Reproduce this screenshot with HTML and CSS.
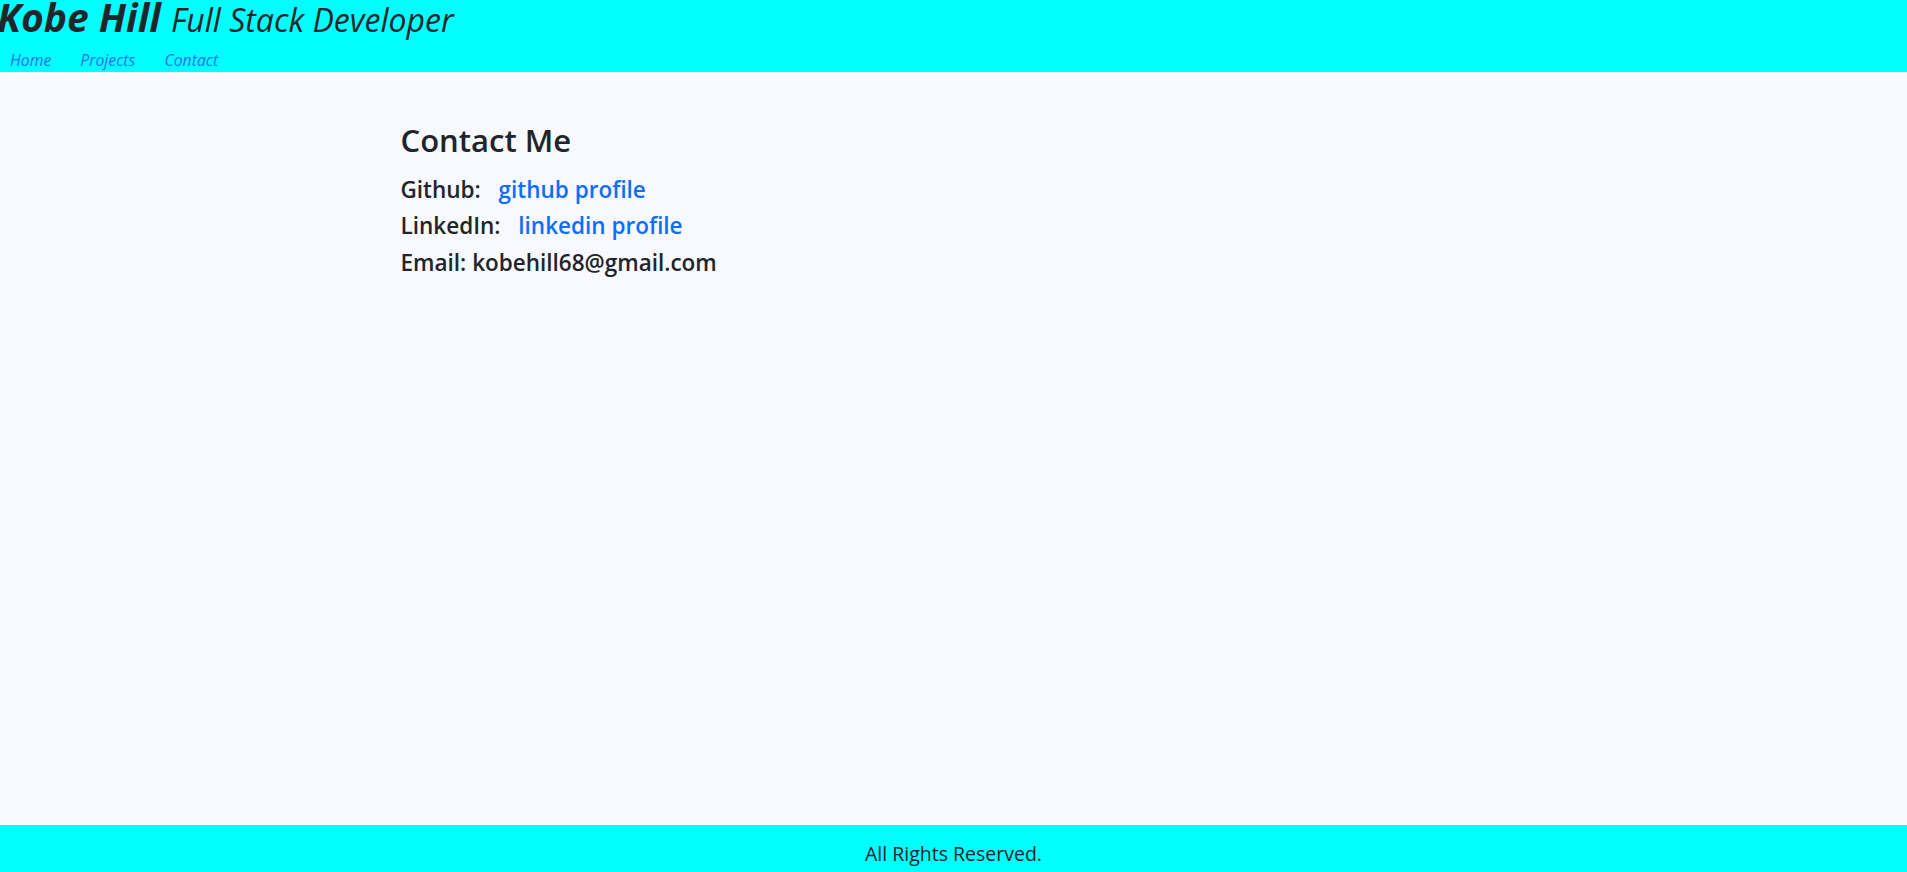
FILE: index.html
```html
<!DOCTYPE html>
<html lang="en">
<head>
<meta charset="utf-8">
<title>Kobe Hill - Contact</title>
<link rel="stylesheet" href="styles.css">
</head>
<body>
<div class="page">
  <header class="site-header">
    <h1 class="brand"><span class="brand-name">Kobe Hill</span> <span class="brand-role">Full Stack Developer</span></h1>
    <nav class="site-nav">
      <a href="#" class="nav-link">Home</a>
      <a href="#" class="nav-link">Projects</a>
      <a href="#" class="nav-link">Contact</a>
    </nav>
  </header>
  <main class="content">
    <section class="contact">
      <h2 class="contact-title">Contact Me</h2>
      <p class="contact-line">Github: <a href="#" class="contact-link">github profile</a></p>
      <p class="contact-line">LinkedIn: <a href="#" class="contact-link">linkedin profile</a></p>
      <p class="contact-line">Email: kobehill68@gmail.com</p>
    </section>
  </main>
  <footer class="site-footer">
    <p class="footer-text">All Rights Reserved.</p>
  </footer>
</div>
</body>
</html>
```

FILE: styles.css
```css
html, body {
  margin: 0;
  padding: 0;
}
body {
  font-family: "Open Sans", "Noto Sans", sans-serif;
  color: #212529;
  background: #f8f8ff;
}
.page {
  min-height: 100vh;
  display: flex;
  flex-direction: column;
}
.site-header {
  background: #00ffff;
  display: flex;
  flex-direction: column;
  height: 72px;
  flex-shrink: 0;
}
.brand {
  margin: 0 0 0 -3px;
  font-size: 39px;
  font-style: italic;
  line-height: 34px;
  font-weight: 400;
  white-space: nowrap;
}
.brand-name {
  font-size: 39px;
  font-weight: 700;
}
.brand-role {
  font-size: 32px;
  font-weight: 400;
}
.site-nav {
  display: flex;
  gap: 29px;
  padding-left: 10px;
  margin-top: 12px;
  height: 22px;
}
.nav-link {
  color: #2b6ef5;
  font-style: italic;
  font-size: 15.8px;
  line-height: 22px;
  text-decoration: none;
}
.content {
  flex: 1;
}
.contact {
  max-width: 1320px;
  margin: 0 auto;
  padding: 0 0 0 107px;
  box-sizing: border-box;
}
.contact-title {
  font-size: 31px;
  font-weight: 600;
  line-height: 1.2;
  margin: 50px 0 17px;
}
.contact-line {
  font-size: 22.5px;
  font-weight: 600;
  line-height: 28.3px;
  margin: 0 0 8px;
}
.contact-link {
  color: #0d6efd;
  text-decoration: none;
  margin-left: 12px;
}
.site-footer {
  background: #00ffff;
  height: 47px;
  display: flex;
  align-items: center;
  justify-content: center;
}
.footer-text {
  margin: 10px 0 0;
  font-size: 19.5px;
  font-weight: 500;
}
```
